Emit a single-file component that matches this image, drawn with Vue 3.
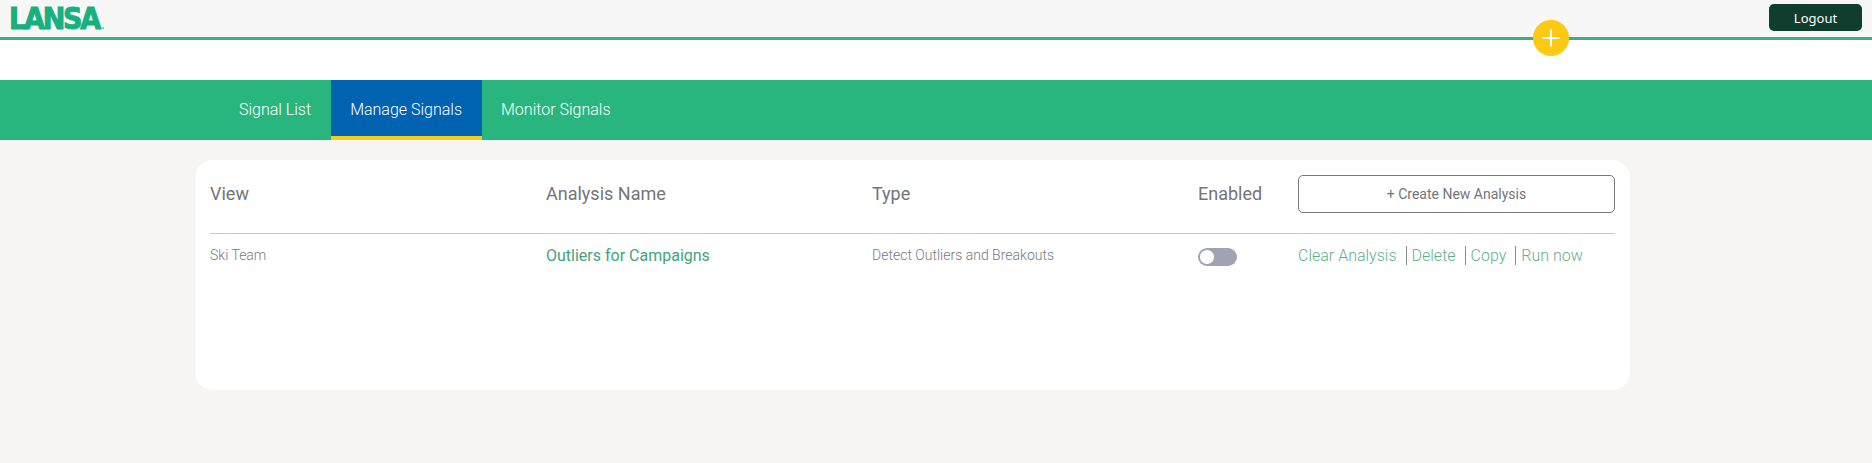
<script setup>
const tabs = [
  { label: 'Signal List', active: false },
  { label: 'Manage Signals', active: true },
  { label: 'Monitor Signals', active: false }
];

const actions = ['Clear Analysis', 'Delete', 'Copy', 'Run now'];
</script>

<template>
  <div class="page">
    <header class="topbar">
      <span class="logo">LANSA<i class="logo-mark"></i></span>
      <button class="logout" type="button">Logout</button>
      <button class="add-btn" type="button" aria-label="Add">
        <svg width="20" height="20" viewBox="0 0 20 20">
          <path d="M10 1.5v17M1.5 10h17" stroke="#fff" stroke-width="2" fill="none" />
        </svg>
      </button>
    </header>
    <div class="band"></div>

    <nav class="tabs">
      <a v-for="tab in tabs" :key="tab.label" :class="['tab', { active: tab.active }]">{{ tab.label }}</a>
    </nav>

    <section class="card">
      <div class="table-row head">
        <div class="label">View</div>
        <div class="label">Analysis Name</div>
        <div class="label">Type</div>
        <div class="label">Enabled</div>
        <div><button class="create-btn" type="button">+ Create New Analysis</button></div>
      </div>
      <div class="table-row body">
        <div class="small">Ski Team</div>
        <div class="name">Outliers for Campaigns</div>
        <div class="small">Detect Outliers and Breakouts</div>
        <div><span class="toggle"><span class="knob"></span></span></div>
        <div class="actions">
          <a v-for="action in actions" :key="action" class="action">{{ action }}</a>
        </div>
      </div>
    </section>
  </div>
</template>

<style scoped>
.page { min-height: 463px; background: #f6f5f3; font-family: Roboto, sans-serif; }
.topbar { position: relative; display: flex; justify-content: space-between; height: 33px; padding: 4px 10px 0 9px; background: #f7f7f7; border-bottom: 3px solid #3fac84; }
.logo { font-family: "DejaVu Sans Condensed", "DejaVu Sans", sans-serif; font-weight: 700; font-size: 30px; line-height: 30px; height: 30px; letter-spacing: -2.2px; color: #17b07f; -webkit-text-stroke: 1px #17b07f; }
.logo-mark { display: inline-block; width: 2px; height: 2px; margin-left: 3px; background: #7ccfb3; }
.logout { width: 93px; height: 27px; border: 0; border-radius: 5px; background: #0f3d2e; color: #fff; font-family: "Noto Sans", sans-serif; font-size: 13px; padding: 0; }
.add-btn { position: absolute; left: 1533px; top: 20px; width: 36px; height: 36px; display: flex; align-items: center; justify-content: center; padding: 0; border: 0; border-radius: 50%; background: #fdc913; }
.band { height: 40px; background: #fff; }
.tabs { display: flex; height: 60px; padding-left: 219.5px; background: #28b67e; }
.tab { display: flex; align-items: center; padding: 0 19.5px 2px; color: #fff; font-size: 16px; font-weight: 300; box-sizing: border-box; }
.tab.active { background: #0063b1; border-bottom: 4px solid #f4cd1a; padding-top: 2px; padding-bottom: 0; }
.card { width: 1435px; height: 230px; margin: 20px 0 0 195px; padding: 0 15px; box-sizing: border-box; background: #fff; border-radius: 18px; }
.table-row { display: grid; grid-template-columns: 336px 326px 326px 100px 317px; align-items: center; }
.head { height: 74px; padding-bottom: 5px; box-sizing: border-box; border-bottom: 1px solid #c9c9c9; color: #737578; font-size: 18px; }
.label { padding-bottom: 2px; }
.body { height: 42px; color: #77797c; }
.small { font-size: 14px; font-weight: 300; }
.name { color: #45a27c; font-size: 16px; font-weight: 400; }
.create-btn { display: block; width: 317px; height: 38px; padding: 0; border: 1px solid #77797c; border-radius: 5px; background: #fff; color: #737578; font-family: Roboto, sans-serif; font-size: 14px; }
.toggle { display: block; position: relative; width: 39px; height: 18px; margin-top: 4px; border-radius: 9px; background: #a0a4b2; }
.knob { position: absolute; left: 2px; top: 2px; width: 14px; height: 14px; border-radius: 50%; background: #fff; }
.actions { display: flex; align-items: center; }
.action { color: #5fae8f; font-size: 16px; font-weight: 300; padding: 0 9px 0 5px; line-height: 19px; border-left: 1px solid #8a8a8a; }
.action:first-child { padding-left: 0; border-left: 0; }
</style>

<style>
html, body { background: #f6f5f3; }
</style>
